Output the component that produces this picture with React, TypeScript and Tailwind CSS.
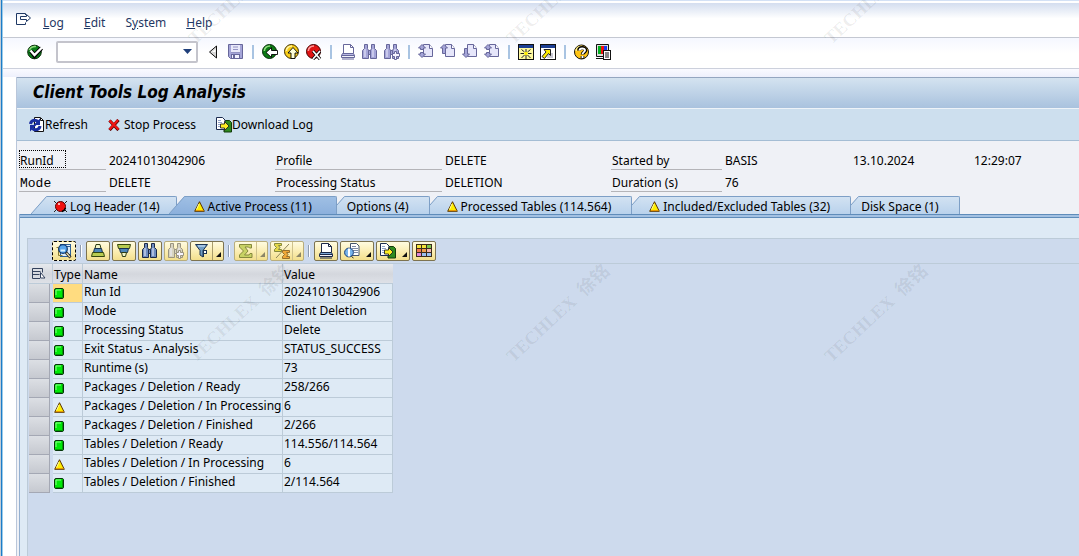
import React from 'react'
import clsx from 'clsx'

type IconProps = { children: React.ReactNode, w?: number, h?: number }

const Icon = ({ children, w = 16, h = 16 }: IconProps) => (
    <svg width={w} height={h} viewBox={`0 0 ${w} ${h}`} fill='none' aria-hidden='true' className='block shrink-0'>
        {children}
    </svg>
)

/* ---------- status icons ---------- */

const GreenLed = () => (
    <Icon w={10} h={11}>
        <rect x='0.5' y='0.5' width='9' height='10' rx='1.5' fill='#00e808' stroke='#06340a' />
        <path d='M2 7V2h5' stroke='#8cff8c' />
        <path d='M8.5 2v7.5H2' stroke='#00a000' />
    </Icon>
)

const YellowLed = () => (
    <Icon w={11} h={11}>
        <path d='M5.5 0.7L10.3 10.3H0.7z' fill='#ffee00' stroke='#5a3200' strokeLinejoin='round' />
        <path d='M5 3L2.5 8.5' stroke='#ffffa0' />
        <path d='M2 9.5h7.5' stroke='#e89a00' />
    </Icon>
)

const RedLed = () => (
    <Icon w={13} h={13}>
        <path d='M0 1l2 2M11 10l2 2M13 1l-2 2M0 12l3-3' stroke='#222' />
        <circle cx='6.5' cy='6.5' r='5' fill='#f01010' stroke='#500' />
        <path d='M8 11.5A5 5 0 0 0 11.5 8' stroke='#000' strokeWidth='1.5' />
        <rect x='4' y='3' width='2' height='2' fill='#ffb0b0' />
    </Icon>
)

/* ---------- system toolbar icons ---------- */

const OkIcon = () => (
    <Icon>
        <ellipse cx='7.5' cy='8' rx='6.8' ry='6.8' fill='#0a7d18' stroke='#0a2a0a' />
        <path d='M2.5 6C3.5 3 6 2.3 9 2.5' stroke='#8fdc7c' strokeWidth='1.5' />
        <path d='M4 7l3.5 4.5L14.5 4' stroke='#000' strokeWidth='4.4' />
        <path d='M3.5 6.5l4 4.5 7.5-7.5' stroke='#fff' strokeWidth='2.4' />
    </Icon>
)

const BackTriangle = () => (
    <Icon w={14} h={14}>
        <path d='M8.5 1v12L1.5 7z' fill='#d6d6d6' stroke='#111' />
        <path d='M7.5 4v3L4 7z' fill='#fff' />
    </Icon>
)

const SaveIcon = () => (
    <Icon>
        <path d='M0.5 0.5h14v14h-12l-2-2z' fill='#a5a5d8' stroke='#67679b' />
        <rect x='3' y='1' width='9' height='7' fill='#e9e9fa' />
        <path d='M3 8.5h9M5 3h5M5 5.5h5' stroke='#9494c4' />
        <rect x='3.5' y='10.5' width='8' height='4' fill='#f2f2ff' stroke='#67679b' />
        <rect x='5' y='11' width='2' height='3' fill='#67679b' />
    </Icon>
)

const NavBall = ({ fill, dark, light, children }: { fill: string, dark: string, light: string, children: React.ReactNode }) => (
    <Icon>
        <circle cx='7.5' cy='7.5' r='7' fill={fill} stroke={dark} />
        <path d='M2.3 7C2.5 4 4.5 2.2 8 2' stroke={light} strokeWidth='1.6' />
        {children}
    </Icon>
)

const GoBack = () => (
    <NavBall fill='#0c7a14' dark='#052a08' light='#8fdc7c'>
        <path d='M4 8.5L9.5 3.5v3h6v4h-6v3z' fill='#fff' stroke='#000' strokeWidth='0.9' />
    </NavBall>
)

const GoExit = () => (
    <NavBall fill='#f8cc18' dark='#3a2a00' light='#fff3a0'>
        <path d='M9 3.5l5 5.5h-3v5.5H7V9H4z' fill='#ffffd8' stroke='#000' strokeWidth='0.9' />
    </NavBall>
)

const GoCancel = () => (
    <NavBall fill='#e01414' dark='#400' light='#ff9a9a'>
        <path d='M7 7l7 8M14 7l-7 8' stroke='#000' strokeWidth='3.2' />
        <path d='M7 7l7 8M14 7l-7 8' stroke='#fff' strokeWidth='1.8' />
    </NavBall>
)

const Printer = ({ line = '#67679b', fill = '#b9b9e4' }: { line?: string, fill?: string }) => (
    <Icon>
        <path d='M3.5 9.5v-9h7l3 3v6' fill='#fff' stroke={line} />
        <path d='M10.5 0.5v3h3' stroke={line} />
        <path d='M2.5 9.5h11l1 2h-13z' fill={fill} stroke={line} />
        <path d='M1.5 11.5h13v2h-13z' fill='#f2f2fa' stroke={line} />
        <path d='M2 15h12' stroke={line} />
    </Icon>
)

const Binoculars = ({ line = '#67679b', fill = '#a5a5d8', plus = false }: { line?: string, fill?: string, plus?: boolean }) => (
    <Icon>
        <path d='M2.5 0.5h3v4l1 2v8h-6v-8l2-2z' fill={fill} stroke={line} />
        <path d='M9.5 0.5h3v4l2 2v8h-6v-8l1-2z' fill={fill} stroke={line} />
        <path d='M6.5 6.5h2v4h-2z' fill={fill} stroke={line} />
        <path d='M3 5v8M11 5v8' stroke='#eef' />
        {plus && <path d='M10.5 7.5h2v2h3v3h-3v3h-2v-3h-2v-3h2z' fill='#f6f4ff' stroke={line} />}
    </Icon>
)

const PageNav = ({ up = false, down = false }: { up?: boolean, down?: boolean }) => (
    <Icon>
        <path d='M5.5 0.5h6l3 4v8h-9z' fill='#e6e6fa' stroke='#67679b' />
        <path d='M11.5 0.5v4h3' fill='#fff' stroke='#67679b' />
        {up && down && <path d='M4 0.5L7.5 4h-2v1.5h-3V4h-2zM4 13.5L7.5 10h-2V8.5h-3V10h-2z' fill='#a5a5d8' stroke='#67679b' />}
        {up && !down && <path d='M4 0.5L7.5 4h-2v5.5h-3V4h-2z' fill='#a5a5d8' stroke='#67679b' />}
        {down && !up && <path d='M4 13.5L7.5 10h-2V4.5h-3V10h-2z' fill='#a5a5d8' stroke='#67679b' />}
    </Icon>
)

const NewSession = () => (
    <Icon>
        <rect x='0.5' y='0.5' width='15' height='15' fill='#fff' stroke='#111' />
        <rect x='1' y='1' width='14' height='3' fill='#1c3f94' />
        <rect x='1' y='4' width='14' height='11' fill='#fff9a0' />
        <path d='M8 5v3M8 11v4M2.5 9.5H6M10 9.5h3.5M3.5 5.5l3 2.5M9.5 11l3 3M12.5 5.5L9.5 8M6.5 11l-3 3' stroke='#222' />
        <rect x='6.5' y='8' width='3' height='3' fill='#ffee00' />
    </Icon>
)

const Shortcut = () => (
    <Icon>
        <rect x='0.5' y='0.5' width='15' height='15' fill='#fff' stroke='#111' />
        <rect x='1' y='1' width='14' height='3' fill='#1c3f94' />
        <path d='M8 9h5v5H7z' fill='#c8c8d4' />
        <path d='M4 5.5h6.5v6l-2-2-4 5L2 12.5 6 8z' fill='#ffee00' stroke='#222' />
    </Icon>
)

const HelpIcon = () => (
    <Icon>
        <circle cx='7.5' cy='8' r='7' fill='#ffc414' stroke='#111' />
        <path d='M2 7C2.5 4 4.5 2.5 7.5 2.3' stroke='#fff08c' strokeWidth='1.6' />
        <path d='M5 6.5C5 3 11.5 3 11.5 6.3C11.5 8.3 8.5 8.3 8.5 10.5M8.5 12v2.5' stroke='#000' strokeWidth='3.6' />
        <path d='M5.5 6.5C5.5 3.8 11 3.8 11 6.3C11 8 8.5 8.3 8.5 10.2M8.5 12v2' stroke='#fff' strokeWidth='1.9' />
    </Icon>
)

const LayoutMenu = () => (
    <Icon>
        <path d='M0.5 0.5h12v12h-12z' fill='#ddd' stroke='#111' />
        <rect x='2' y='2' width='3' height='8' fill='#00b020' />
        <rect x='5' y='2' width='3' height='8' fill='#f01010' />
        <rect x='8' y='2' width='3' height='8' fill='#1838f0' />
        <path d='M0 14.5h9' stroke='#111' />
        <rect x='7.5' y='6.5' width='7' height='9' fill='#fff' stroke='#111' />
        <path d='M9 9h4M9 11h4M9 13h4' stroke='#111' />
    </Icon>
)

/* ---------- application toolbar icons ---------- */

const RefreshIcon = () => (
    <Icon>
        <path d='M5.5 0.5h6l3 3v11h-9z' fill='#fff' stroke='#111' />
        <path d='M11.5 1v2.5h3' stroke='#111' />
        <path d='M1.5 7C2 3.5 6 2 9 4.5' stroke='#1a2ea0' strokeWidth='3' />
        <path d='M11 1.5V8H4.5z' fill='#1a2ea0' />
        <path d='M11 9C10.5 12.5 6.5 14 3.5 11.5' stroke='#1a2ea0' strokeWidth='3' />
        <path d='M1 14.5V8h6.5z' fill='#1a2ea0' />
    </Icon>
)

const StopIcon = () => (
    <Icon w={12} h={12}>
        <path d='M1.5 1.5l9 9.5M10.5 1l-9 10' stroke='#500' strokeWidth='3.2' />
        <path d='M1.5 1.5l9 9M10 1l-8.5 9.5' stroke='#f01414' strokeWidth='2.2' />
    </Icon>
)

const ExportIcon = () => (
    <Icon>
        <path d='M8 3.5h5.5l2 2V15H8z' fill='#2f8a1e' stroke='#123c0a' />
        <path d='M0.5 0.5h6L9 3v9.5H0.5z' fill='#fff' stroke='#1c2c50' />
        <path d='M2 3.5h3M2 5.5h4M2 7.5h2M2 9.5h2' stroke='#8fa2c8' />
        <path d='M4.5 7h4V4.5L13 9l-4.5 4.5V11h-4z' fill='#ffee22' stroke='#222' strokeWidth='0.9' />
    </Icon>
)

/* ---------- grid toolbar icons ---------- */

const DetailsIcon = () => (
    <Icon>
        <rect x='4.5' y='1.5' width='10' height='12' fill='#dcecfa' stroke='#2d5f96' />
        <path d='M10 3.5h4M11 11.5h3' stroke='#2d5f96' />
        <path d='M0.5 4.5h2v8h4' stroke='#8a7a30' />
        <circle cx='7' cy='6' r='4.3' fill='#58a6ec' stroke='#123a70' strokeWidth='1.3' />
        <path d='M4.5 7.5H9' stroke='#d8f0ff' strokeWidth='2' />
        <path d='M10 9.5l4.5 5' stroke='#222' strokeWidth='2.8' />
        <path d='M10.5 10l3.5 4' stroke='#f0e0b0' strokeWidth='1.2' />
    </Icon>
)

const SortAsc = () => (
    <Icon>
        <path d='M6 1.5h4l1 4H5z' fill='#f0f4c8' stroke='#2c3c14' />
        <path d='M4.5 5.5h7l1 4h-9z' fill='#4d86b8' stroke='#173050' />
        <path d='M2.5 9.5h11l1 4h-13z' fill='#b8cc50' stroke='#34460e' />
    </Icon>
)

const SortDesc = () => (
    <Icon>
        <path d='M1.5 1.5h13l-1 4h-11z' fill='#b8cc50' stroke='#34460e' />
        <path d='M3.5 5.5h9l-1 4h-7z' fill='#4d86b8' stroke='#173050' />
        <path d='M5.5 9.5h5l-1 4h-3z' fill='#f0f4c8' stroke='#2c3c14' />
    </Icon>
)

const FilterIcon = () => (
    <Icon>
        <path d='M1.5 1.5h12l-4.5 6V14l-3-2V7.5z' fill='#6f9cc4' stroke='#1c3452' />
        <path d='M4 3h7' stroke='#d8ecff' />
        <rect x='9.5' y='7.5' width='3' height='3' fill='#fff' stroke='#1c3452' />
        <path d='M9.5 10.5V14' stroke='#1c3452' />
    </Icon>
)

const SumIcon = () => (
    <Icon>
        <path d='M1.5 1.5h12V5h-2l-1-1H7l3 4-3.5 4H11l1-1.5h2v4H1.5V12l4-4-4-4z' fill='#c8d264' stroke='#85893c' />
    </Icon>
)

const SubtotalIcon = () => (
    <Icon>
        <path d='M15 1L2 15' stroke='#8c8458' />
        <path d='M0.5 0.5h7v2h-3l1.5 2-1.5 2h3v2h-7v-2l2-2-2-2z' fill='#e4d848' stroke='#85893c' />
        <path d='M8.5 7.5h7v2h-3l1.5 2-1.5 2h3v2h-7v-2l2-2-2-2z' fill='#f0a838' stroke='#96702c' />
    </Icon>
)

const ViewsIcon = () => (
    <Icon>
        <path d='M6.5 0.5h6L15 3v9.5H6.5z' fill='#fff' stroke='#44546c' />
        <path d='M8 3.5h4M8 5.5h6M9 7.5h5M10 9.5h4' stroke='#7d8aa4' />
        <circle cx='5' cy='9.5' r='4.4' fill='#78b4ec' stroke='#143c78' />
        <path d='M5 5.5v8' stroke='#fff' strokeWidth='2' />
        <path d='M7.5 13.5l2 1.5' stroke='#222' />
    </Icon>
)

const LayoutGrid = () => (
    <Icon>
        <rect x='0' y='1' width='16' height='13' fill='#3c2c1c' />
        <path d='M1 2h4v3H1zM6 2h4v3H6z' fill='#f4e43c' />
        <path d='M11 2h4v3h-4z' fill='#7cc850' />
        <path d='M1 6h4v3H1z' fill='#f07c50' />
        <path d='M6 6h4v3H6z' fill='#f0a050' />
        <path d='M11 6h4v3h-4z' fill='#f4b8b0' />
        <path d='M1 10h4v3H1z' fill='#e088dc' />
        <path d='M6 10h4v3H6zM11 10h4v3h-4z' fill='#9cc0f0' />
    </Icon>
)

/* ---------- data ---------- */

const menus = [
    { before: '', key: 'L', after: 'og' },
    { before: '', key: 'E', after: 'dit' },
    { before: 'S', key: 'y', after: 'stem' },
    { before: '', key: 'H', after: 'elp' },
]

const systemTools = [
    [
        { label: 'Back', icon: <GoBack /> },
        { label: 'Exit', icon: <GoExit /> },
        { label: 'Cancel', icon: <GoCancel /> },
    ],
    [
        { label: 'Print', icon: <Printer /> },
        { label: 'Find', icon: <Binoculars /> },
        { label: 'Find next', icon: <Binoculars plus /> },
    ],
    [
        { label: 'First page', icon: <PageNav up down /> },
        { label: 'Previous page', icon: <PageNav up /> },
        { label: 'Next page', icon: <PageNav down /> },
        { label: 'Last page', icon: <PageNav up down /> },
    ],
    [
        { label: 'New session', icon: <NewSession /> },
        { label: 'Create shortcut', icon: <Shortcut /> },
    ],
    [
        { label: 'Help', icon: <HelpIcon /> },
        { label: 'Customize layout', icon: <LayoutMenu /> },
    ],
]

const tabs = [
    { label: 'Log Header (14)', led: 'red', z: 'z-10', pad: 'pr-4' },
    { label: 'Active Process (11)', led: 'yellow', z: 'z-20', pad: 'pr-6' },
    { label: 'Options (4)', led: '', z: 'z-10', pad: 'pr-5' },
    { label: 'Processed Tables (114.564)', led: 'yellow', z: 'z-[9]', pad: 'pr-5' },
    { label: 'Included/Excluded Tables (32)', led: 'yellow', z: 'z-[8]', pad: 'pr-5' },
    { label: 'Disk Space (1)', led: '', z: 'z-[7]', pad: 'pr-5' },
]

const rows = [
    { led: 'green', name: 'Run Id', value: '20241013042906' },
    { led: 'green', name: 'Mode', value: 'Client Deletion' },
    { led: 'green', name: 'Processing Status', value: 'Delete' },
    { led: 'green', name: 'Exit Status - Analysis', value: 'STATUS_SUCCESS' },
    { led: 'green', name: 'Runtime (s)', value: '73' },
    { led: 'green', name: 'Packages / Deletion / Ready', value: '258/266' },
    { led: 'yellow', name: 'Packages / Deletion / In Processing', value: '6' },
    { led: 'green', name: 'Packages / Deletion / Finished', value: '2/266' },
    { led: 'green', name: 'Tables / Deletion / Ready', value: '114.556/114.564' },
    { led: 'yellow', name: 'Tables / Deletion / In Processing', value: '6' },
    { led: 'green', name: 'Tables / Deletion / Finished', value: '2/114.564' },
]

const watermarks = [
    'left-[198px] top-[28px]', 'left-[516px] top-[28px]', 'left-[834px] top-[28px]',
    'left-[198px] top-[346px]', 'left-[516px] top-[346px]', 'left-[834px] top-[346px]',
]

/* ---------- parts ---------- */

const ToolButton = ({ label, children }: { label: string, children: React.ReactNode }) => (
    <button type='button' aria-label={label} className='flex h-4 items-center'>{children}</button>
)

const Separator = () => <span className='mx-[2px] h-[14px] w-[2px] bg-[#a9c4e2]'></span>

const GridSeparator = () => <span className='mx-[2px] h-3 w-[2px] border-l border-[#8f9cae] bg-white'></span>

type GridButtonProps = { label: string, split?: boolean, menu?: boolean, disabled?: boolean, focused?: boolean, children: React.ReactNode }

const GridButton = ({ label, split, menu, disabled, focused, children }: GridButtonProps) => (
    <button
        type='button'
        aria-label={label}
        disabled={disabled}
        className={clsx(
            'flex h-5 items-center rounded-xs border bg-linear-to-b from-[#fffbe0] via-[#fbeeb4] to-[#f3df8c] pl-[3px]',
            split || menu ? 'w-[34px]' : 'w-6',
            focused ? 'border-dashed border-black' : disabled ? 'border-[#b9ad7c]' : 'border-[#7d7350]'
        )}
    >
        {children}
        {(split || menu) && (
            <span className={clsx('ml-[2px] flex h-full flex-1 items-end justify-end pr-[2px] pb-[3px]', split && 'border-l', disabled ? 'border-[#cfc28c]' : 'border-[#a89c6c]')}>
                <svg width='5' height='5' viewBox='0 0 5 5'><path d='M5 0v5H0z' fill={disabled ? '#8c8668' : '#111'} /></svg>
            </span>
        )}
    </button>
)

const Led = ({ color }: { color: string }) => {
    if (color === 'green') return <GreenLed />
    if (color === 'yellow') return <YellowLed />
    if (color === 'red') return <RedLed />
    return null
}

const Tab = ({ label, led, z, pad, active }: { label: string, led: string, z: string, pad: string, active: boolean }) => (
    <button type='button' role='tab' aria-selected={active} className={clsx('relative -ml-2 flex h-[18px]', z)}>
        <svg width='17' height='18' viewBox='0 0 17 18' className='shrink-0' aria-hidden='true'>
            <defs>
                <linearGradient id='tab-on' x1='0' y1='0' x2='0' y2='1'>
                    <stop offset='0' stopColor='#9fbfe4' />
                    <stop offset='1' stopColor='#8cb0dc' />
                </linearGradient>
                <linearGradient id='tab-off' x1='0' y1='0' x2='0' y2='1'>
                    <stop offset='0' stopColor='#d2e2f2' />
                    <stop offset='1' stopColor='#b9d2ec' />
                </linearGradient>
            </defs>
            <path d='M0 18L15.5 0H17v18z' fill={active ? 'url(#tab-on)' : 'url(#tab-off)'} />
            <path d='M0 18L15.5 0.5H17' fill='none' stroke='#7d9fc6' />
        </svg>
        <span
            className={clsx(
                'flex h-full items-center gap-[3px] rounded-tr-xs border-t border-r border-[#7d9fc6] pt-[2px] whitespace-nowrap',
                pad,
                led === 'red' ? 'pl-[6px]' : led ? 'pl-2' : 'pl-px',
                active ? 'bg-linear-to-b from-[#9fbfe4] to-[#8cb0dc]' : 'bg-linear-to-b from-[#d2e2f2] to-[#b9d2ec]'
            )}
        >
            <Led color={led} />
            {label}
        </span>
    </button>
)

const Label = ({ children }: { children: React.ReactNode }) => (
    <dt className='mr-[3px] h-5 border-b border-[#b4b4b8] pl-px'>{children}</dt>
)

const App = () => {

    const activeTab = 1

    return (
        <div className="relative flex min-h-screen overflow-hidden bg-white font-['Noto_Sans',sans-serif] text-xs leading-[18px] text-black">

            {/* edge of the window behind */}
            <div className='w-[3px] shrink-0 border-r border-l border-r-[#9ccbe8] border-l-[#c2ccd6] bg-[#1c7cc8]'></div>

            <div className='flex min-w-0 flex-1 flex-col'>

                <nav className='flex h-[38px] items-center border-b border-[#c4c8d2] bg-linear-to-b from-[#cbd7ec] to-white to-50% pt-2 pl-[13px] text-[#1f3864] shadow-[inset_0_1px_#d3e1f5,inset_0_3px_#fff]'>
                    <button type='button' aria-label='Window menu' className='mr-3 mb-2'>
                        <Icon w={15} h={12}>
                            <path d='M9.5 2V0.5h-9v11h9v-2' stroke='#1f3864' />
                            <path d='M4.5 3.5h6v-2l4 3.5-4 3.5v-2h-6z' fill='#fff' stroke='#1f3864' />
                        </Icon>
                    </button>
                    <div className='flex gap-5'>
                        {menus.map(m => (
                            <button type='button' key={m.key}>{m.before}<u>{m.key}</u>{m.after}</button>
                        ))}
                    </div>
                </nav>

                <div className='flex h-[31px] items-center gap-[6px] border-b border-[#ccd0dc] bg-linear-to-b from-[#f5f7ff] to-white to-50% pb-[3px] pl-6'>
                    <ToolButton label='Enter'><OkIcon /></ToolButton>
                    <div className='relative mr-1 ml-[7px] flex h-[22px] w-[142px]'>
                        <input type='text' aria-label='Command' className='w-full rounded-xs border-2 border-[#c4c4cc] bg-white px-1 outline-none' />
                        <svg width='9' height='5' viewBox='0 0 9 5' className='absolute top-2 right-[6px]' aria-hidden='true'>
                            <path d='M0 0h9L4.5 5z' fill='#1f3f7a' />
                        </svg>
                    </div>
                    <ToolButton label='Previous'><BackTriangle /></ToolButton>
                    <ToolButton label='Save'><SaveIcon /></ToolButton>
                    {systemTools.map((group, i) => (
                        <React.Fragment key={i}>
                            <Separator />
                            {group.map(tool => (
                                <ToolButton key={tool.label} label={tool.label}>{tool.icon}</ToolButton>
                            ))}
                        </React.Fragment>
                    ))}
                </div>

                <div className='h-2 bg-linear-to-b from-[#fafaff] to-[#eef0fc]'></div>

                <main className='ml-[13px] flex flex-1 flex-col border-l border-[#b9c6da] bg-[#eff1f6]'>

                    <div className='h-8 border-t border-b border-t-[#94a6c0] border-b-[#eef3f8] bg-linear-to-b from-[#d4e3f0] to-[#a9c2de] pl-4'>
                        <h1 className="font-['DejaVu_Sans_Condensed','DejaVu_Sans',sans-serif] text-[17px] leading-7 font-bold italic">Client Tools Log Analysis</h1>
                    </div>

                    <div className='flex h-8 items-center border-b border-[#a4bdd4] bg-[#cddfee] pl-3'>
                        <button type='button' className='mr-5 flex items-center'><RefreshIcon />Refresh</button>
                        <button type='button' className='mr-5 flex items-center gap-1'><StopIcon />Stop Process</button>
                        <button type='button' className='flex items-center'><ExportIcon />Download Log</button>
                    </div>

                    <dl className='grid grid-cols-[90px_166px_170px_166px_114px_128px_121px_1fr] pt-[9px] pl-[2px] leading-[22px]'>
                        <Label><span className='-ml-px block h-[18px] w-[47px] border border-dotted border-black leading-5'>RunId</span></Label>
                        <dd>20241013042906</dd>
                        <Label>Profile</Label>
                        <dd>DELETE</dd>
                        <Label>Started by</Label>
                        <dd>BASIS</dd>
                        <dd>13.10.2024</dd>
                        <dd>12:29:07</dd>
                        <Label><span className="font-['Liberation_Mono',monospace] text-[13px]">Mode</span></Label>
                        <dd>DELETE</dd>
                        <Label>Processing Status</Label>
                        <dd>DELETION</dd>
                        <Label>Duration (s)</Label>
                        <dd>76</dd>
                    </dl>

                    <div role='tablist' className='flex pt-[2px] pl-[22px]'>
                        {tabs.map((tab, i) => (
                            <Tab key={tab.label} {...tab} active={i === activeTab} />
                        ))}
                    </div>

                    <section className='ml-[2px] flex flex-1 flex-col border-l border-[#94b0d0] bg-[#deeaf5]'>
                        <div className='h-1 border-t border-b border-[#5f8cba] bg-[#a3c1e2]'></div>

                        <div className='mt-5 ml-[7px] flex-1 border-t border-l border-[#bccbd8] bg-[#cddaed]'>

                            <div className='flex h-[25px] items-center gap-[2px] border-b border-[#bccbd8] pl-6'>
                                <GridButton label='Details' focused><DetailsIcon /></GridButton>
                                <GridSeparator />
                                <GridButton label='Sort ascending'><SortAsc /></GridButton>
                                <GridButton label='Sort descending'><SortDesc /></GridButton>
                                <GridButton label='Find'><Binoculars line='#1c2848' fill='#6f8cc0' /></GridButton>
                                <GridButton label='Find next' disabled><Binoculars line='#9a9480' fill='#d8d4c0' plus /></GridButton>
                                <GridButton label='Filter' split><FilterIcon /></GridButton>
                                <GridSeparator />
                                <GridButton label='Total' split disabled><SumIcon /></GridButton>
                                <GridButton label='Subtotal' split disabled><SubtotalIcon /></GridButton>
                                <GridSeparator />
                                <GridButton label='Print'><Printer line='#1c2848' fill='#7ca8d8' /></GridButton>
                                <GridButton label='Views' menu><ViewsIcon /></GridButton>
                                <GridButton label='Export' menu><ExportIcon /></GridButton>
                                <GridButton label='Change layout'><LayoutGrid /></GridButton>
                            </div>

                            <table className='ml-px table-fixed border-separate border-spacing-0'>
                                <colgroup>
                                    <col className='w-6' />
                                    <col className='w-[30px]' />
                                    <col className='w-[200px]' />
                                    <col className='w-[110px]' />
                                </colgroup>
                                <thead>
                                    <tr className='h-5 bg-linear-to-b from-[#e6e9ee] via-[#d4d7dd] to-[#dfe2e8] text-left leading-4'>
                                        <th className='border-r border-b border-[#bccbd8] p-0 pl-[3px]'>
                                            <button type='button' aria-label='Select all' className='block'>
                                                <Icon w={14} h={12}>
                                                    <path d='M8 10.5H0.5v-10h10v4M0.5 3.5h8M0.5 6.5h7' stroke='#33415c' />
                                                    <path d='M8.5 4.5L13 10H8.5z' fill='#fff' stroke='#33415c' />
                                                </Icon>
                                            </button>
                                        </th>
                                        <th className='border-r border-b border-[#bccbd8] p-0 pt-[2px] pl-px font-normal'>Type</th>
                                        <th className='border-r border-b border-[#bccbd8] p-0 pt-[2px] pl-px font-normal'>Name</th>
                                        <th className='border-b border-[#bccbd8] p-0 pt-[2px] pl-px font-normal'>Value</th>
                                    </tr>
                                </thead>
                                <tbody>
                                    {rows.map((row, i) => (
                                        <tr key={row.name} className='h-[19px] bg-[#deeaf5] leading-4'>
                                            <td className='border-r-3 border-[#cddaed] p-0'>
                                                <div className='h-[19px] border-r border-b border-[#a4a8b4] bg-linear-to-b from-[#dcdfe4] to-[#c6c9d0]'></div>
                                            </td>
                                            <td className={clsx('border-r border-b border-[#bccbd8] p-0 pl-px', i === 0 && 'bg-[#ffdc80]')}>
                                                <Led color={row.led} />
                                            </td>
                                            <td className='border-r border-b border-[#bccbd8] p-0 pb-[2px] pl-px whitespace-nowrap'>{row.name}</td>
                                            <td className='border-r border-b border-[#bccbd8] p-0 pb-[2px] pl-px whitespace-nowrap'>{row.value}</td>
                                        </tr>
                                    ))}
                                </tbody>
                            </table>
                        </div>
                    </section>
                </main>
            </div>

            {/* watermark */}
            <div className='pointer-events-none absolute inset-0 z-30 overflow-hidden select-none' aria-hidden='true'>
                {watermarks.map(pos => (
                    <div key={pos} className={clsx("absolute origin-bottom-left -rotate-[43deg] font-['Liberation_Serif','Noto_Sans_CJK_SC',serif] text-lg leading-5 font-bold whitespace-nowrap text-black/8", pos)}>
                        TECHLEX&nbsp; 徐铭
                    </div>
                ))}
            </div>
        </div>
    )
}

export default App
